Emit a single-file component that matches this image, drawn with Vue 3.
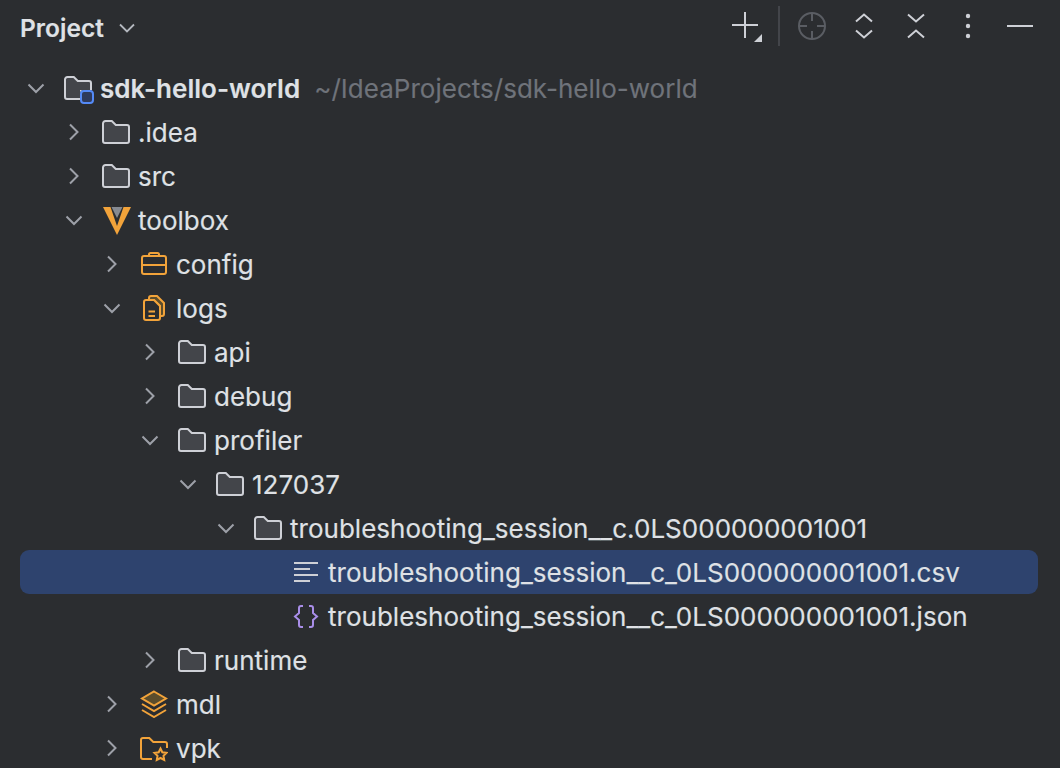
<template>
  <div class="panel">
    <!-- Tool window header -->
    <div class="header">
      <span class="title">Project</span>
      <svg class="title-arrow" width="20" height="20" viewBox="0 0 20 20" fill="none">
        <path d="M3 6.500l7 7 7-7" stroke="#b4b8bf" stroke-width="1.800" />
      </svg>
      <div class="toolbar">
        <svg class="tool plus" width="32" height="32" viewBox="0 0 32 32" fill="none">
          <path d="M1 15h26M14 2v26" stroke="#ced0d6" stroke-width="2" />
          <path d="M31 24v8h-8z" fill="#ced0d6" />
        </svg>
        <span class="divider"></span>
        <svg class="tool locate" width="30" height="30" viewBox="0 0 30 30" fill="none" stroke="#5a5d63" stroke-width="2">
          <circle cx="15" cy="15" r="13" />
          <path d="M2 15h8M20 15h8M15 2v8M15 20v8" />
        </svg>
        <svg class="tool expand" width="18" height="28" viewBox="0 0 18 28" fill="none" stroke="#ced0d6" stroke-width="2">
          <path d="M1 9.500l8-7 8 7M1 18.500l8 7 8-7" />
        </svg>
        <svg class="tool collapse" width="18" height="28" viewBox="0 0 18 28" fill="none" stroke="#ced0d6" stroke-width="2">
          <path d="M1 2.500l8 7 8-7M1 25.500l8-7 8 7" />
        </svg>
        <svg class="tool dots" width="6" height="26" viewBox="0 0 6 26" fill="#ced0d6">
          <circle cx="3" cy="3" r="2.200" />
          <circle cx="3" cy="13" r="2.200" />
          <circle cx="3" cy="23" r="2.200" />
        </svg>
        <svg class="tool minimize" width="26" height="4" viewBox="0 0 26 4" fill="none">
          <path d="M0 2h26" stroke="#ced0d6" stroke-width="2" />
        </svg>
      </div>
    </div>

    <!-- Tree -->
    <div class="tree">
      <div
        v-for="row in rows"
        :key="row.name"
        class="row"
        :class="{ selected: row.selected }"
        :style="{ paddingLeft: row.depth * 38 + 'px' }"
      >
        <span class="chevron">
          <svg v-if="row.open === true" width="20" height="20" viewBox="0 0 20 20" fill="none">
            <path d="M2.500 6.500L10 14l7.500-7.500" stroke="#9da0a8" stroke-width="2" />
          </svg>
          <svg v-else-if="row.open === false" width="20" height="20" viewBox="0 0 20 20" fill="none">
            <path d="M6 2.500L13.500 10 6 17.500" stroke="#9da0a8" stroke-width="2" />
          </svg>
        </span>

        <span class="icon">
          <svg v-if="row.icon === 'folder'" width="28" height="28" viewBox="0 0 28 28" fill="none">
            <path d="M1 5.500A2.500 2.500 0 0 1 3.500 3h6.300l4 4H25a2 2 0 0 1 2 2v14a2 2 0 0 1-2 2H3a2 2 0 0 1-2-2z" fill="#43454a" stroke="#ced0d6" stroke-width="2" />
          </svg>
          <svg v-else-if="row.icon === 'module'" width="32" height="32" viewBox="0 0 32 32" fill="none">
            <path d="M1 7.500A2.500 2.500 0 0 1 3.500 5h6.300l4 4H25a2 2 0 0 1 2 2v8H17v8H3a2 2 0 0 1-2-2z" fill="#43454a" stroke="#ced0d6" stroke-width="2" />
            <rect x="16" y="18" width="14" height="14" rx="4" fill="#2b2d30" />
            <rect x="17" y="19" width="12" height="12" rx="3" fill="#2e3a5c" stroke="#548af7" stroke-width="2" />
          </svg>
          <svg v-else-if="row.icon === 'vault'" width="30" height="30" viewBox="0 0 30 30">
            <path d="M1 2h7.500L15 21l6.500-19H29L15 30z" fill="#f2a33a" />
            <path d="M9.500 2h11L15 13z" fill="#868a91" />
          </svg>
          <svg v-else-if="row.icon === 'case'" width="28" height="28" viewBox="0 0 28 28" fill="none" stroke="#f2a33a" stroke-width="2">
            <rect x="2" y="6" width="24" height="18" rx="2" />
            <path d="M2 15h24M9 6V4.500A1.500 1.500 0 0 1 10.500 3h7A1.500 1.500 0 0 1 19 4.500V6" />
          </svg>
          <svg v-else-if="row.icon === 'docs'" width="28" height="28" viewBox="0 0 28 28" fill="none" stroke="#f2a33a" stroke-width="2">
            <path d="M9 6V4a2 2 0 0 1 2-2h6l7 7v11a2 2 0 0 1-2 2h-2V12l-6-6z" fill="#5c4d2c" />
            <path d="M4 8a2 2 0 0 1 2-2h8l6 6v12a2 2 0 0 1-2 2H6a2 2 0 0 1-2-2z" fill="#2b2d30" />
            <path d="M8.500 17.500h6.500M8.500 22h6.500" />
          </svg>
          <svg v-else-if="row.icon === 'text'" width="28" height="28" viewBox="0 0 28 28" fill="none" stroke="#ced0d6" stroke-width="2">
            <path d="M2 5h24M2 11h16M2 17h24M2 23h16" />
          </svg>
          <svg v-else-if="row.icon === 'json'" width="28" height="28" viewBox="0 0 28 28" fill="none" stroke="#a98ee8" stroke-width="2">
            <path d="M11 4H9a2 2 0 0 0-2 2v5l-4 3.500L7 18v5a2 2 0 0 0 2 2h2M17 4h2a2 2 0 0 1 2 2v5l4 3.500-4 3.500v5a2 2 0 0 1-2 2h-2" />
          </svg>
          <svg v-else-if="row.icon === 'layers'" width="28" height="28" viewBox="0 0 28 28" fill="none" stroke="#f2a33a" stroke-width="2">
            <path d="M14 1.500L26 8.500 14 15.500 2 8.500z" fill="#5c4d2c" />
            <path d="M2 14l12 7 12-7M2 20l12 7 12-7" />
          </svg>
          <svg v-else-if="row.icon === 'star'" width="28" height="28" viewBox="0 0 28 28" fill="none" stroke="#f2a33a" stroke-width="2">
            <path d="M12 25H3a2 2 0 0 1-2-2V6a2 2 0 0 1 2-2h6.300l4 4H25a2 2 0 0 1 2 2v4" />
            <path d="M20.500 14.500l1.800 3.800 4.200.6-3 2.900.7 4.200-3.700-2-3.700 2 .7-4.200-3-2.900 4.200-.6z" />
          </svg>
        </span>

        <span class="name" :class="{ bold: row.bold }">{{ row.name }}</span>
        <span v-if="row.hint" class="hint">{{ row.hint }}</span>
      </div>
    </div>
  </div>
</template>

<script setup>
const rows = [
  { name: "sdk-hello-world", hint: "~/IdeaProjects/sdk-hello-world", depth: 0, open: true, icon: "module", bold: true },
  { name: ".idea", depth: 1, open: false, icon: "folder" },
  { name: "src", depth: 1, open: false, icon: "folder" },
  { name: "toolbox", depth: 1, open: true, icon: "vault" },
  { name: "config", depth: 2, open: false, icon: "case" },
  { name: "logs", depth: 2, open: true, icon: "docs" },
  { name: "api", depth: 3, open: false, icon: "folder" },
  { name: "debug", depth: 3, open: false, icon: "folder" },
  { name: "profiler", depth: 3, open: true, icon: "folder" },
  { name: "127037", depth: 4, open: true, icon: "folder" },
  { name: "troubleshooting_session__c.0LS000000001001", depth: 5, open: true, icon: "folder" },
  { name: "troubleshooting_session__c_0LS000000001001.csv", depth: 6, icon: "text", selected: true },
  { name: "troubleshooting_session__c_0LS000000001001.json", depth: 6, icon: "json" },
  { name: "runtime", depth: 3, open: false, icon: "folder" },
  { name: "mdl", depth: 2, open: false, icon: "layers" },
  { name: "vpk", depth: 2, open: false, icon: "star" },
];
</script>

<style>
body {
  background: #2b2d30;
}
</style>

<style scoped>
.panel {
  width: 1060px;
  height: 768px;
  overflow: hidden;
  background: #2b2d30;
  color: #dfe1e5;
  font-family: Inter, "Liberation Sans", sans-serif;
  font-size: 26px;
  letter-spacing: 0.02px;
  -webkit-text-stroke: 0.15px;
}

.header {
  display: flex;
  align-items: center;
  height: 56px;
  padding-left: 20px;
}

.title {
  font-weight: 600;
  font-size: 24.5px;
}

.title-arrow {
  margin-left: 13px;
}

.toolbar {
  display: flex;
  align-items: center;
  margin-left: auto;
  margin-right: 27px;
  padding-bottom: 4px;
}

.tool {
  flex-shrink: 0;
}

.divider {
  width: 2px;
  height: 40px;
  margin: 0 17px 0 15px;
  background: #43454a;
}

.expand {
  margin-left: 28px;
}

.collapse {
  margin-left: 34px;
}

.dots {
  margin-left: 40px;
}

.minimize {
  margin-left: 36px;
}

.tree {
  display: flex;
  flex-direction: column;
  padding: 10px 22px 0 20px;
}

.row {
  display: flex;
  align-items: center;
  flex-shrink: 0;
  height: 44px;
  border-radius: 9px;
  white-space: nowrap;
}

.row.selected {
  background: #2e436e;
}

.chevron {
  display: flex;
  align-items: center;
  justify-content: center;
  width: 32px;
  height: 28px;
  margin-right: 12px;
}

.icon {
  display: flex;
  align-items: center;
  width: 28px;
  height: 30px;
  margin-right: 8px;
}

.icon svg {
  flex-shrink: 0;
}

.name.bold {
  font-weight: 600;
}

.hint {
  margin-left: 14px;
  color: #6f737a;
}
</style>
